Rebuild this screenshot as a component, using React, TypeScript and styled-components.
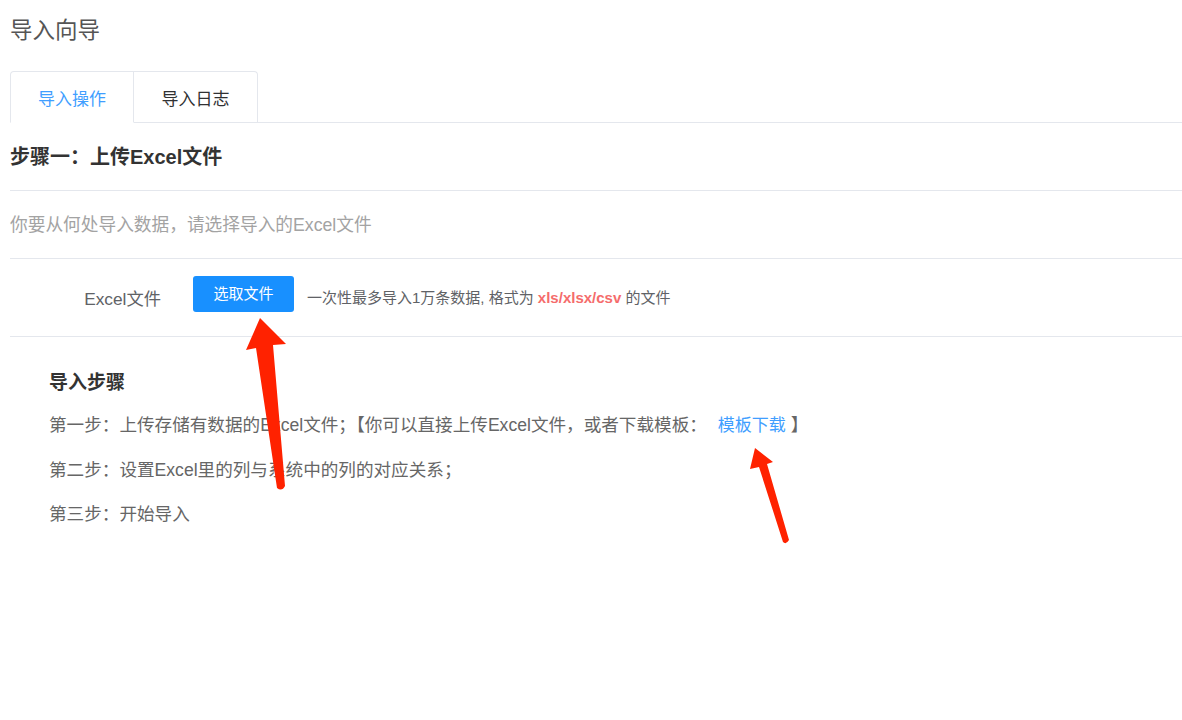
import React from "react";
import styled, { createGlobalStyle } from "styled-components";

const Global = createGlobalStyle`
  html, body { margin: 0; padding: 0; background: #fff; }
  body {
    font-family: "Liberation Sans", Arial, "Noto Sans CJK SC", sans-serif;
    -webkit-font-smoothing: antialiased;
  }
  * { box-sizing: border-box; }
`;

const Page = styled.div`
  position: relative;
  width: 1182px;
  height: 720px;
  padding-left: 10px;
  overflow: hidden;
`;

const Title = styled.h1`
  margin: 0;
  padding-top: 20px;
  font-size: 22.5px;
  line-height: 22px;
  font-weight: normal;
  color: #555;
`;

const TabBar = styled.div`
  display: flex;
  margin-top: 29px;
  border-bottom: 1px solid #e4e7ed;
  height: 52px;
`;

const Tab = styled.div<{ $active?: boolean; $first?: boolean }>`
  height: 52px;
  display: flex;
  align-items: center;
  justify-content: center;
  border-top: 1px solid #e4e7ed;
  border-right: 1px solid #e4e7ed;
  border-left: ${(p) => (p.$first ? "1px solid #e4e7ed" : "none")};
  border-radius: ${(p) => (p.$first ? "4px 0 0 0" : "0 4px 0 0")};
  border-bottom: 1px solid ${(p) => (p.$active ? "#fff" : "transparent")};
  width: 124px;
  font-size: 17px;
  color: ${(p) => (p.$active ? "#409eff" : "#303133")};
  margin-bottom: -1px;
  padding-top: 1px;
`;

const Section = styled.div<{ $h: number }>`
  height: ${(p) => p.$h}px;
  border-bottom: 1px solid #e4e7ed;
  display: flex;
  align-items: center;
`;

const StepTitle = styled.div`
  font-size: 20px;
  font-weight: bold;
  color: #333;
  margin-bottom: 3px;
`;

const Desc = styled.div`
  font-size: 17.7px;
  color: #a3a3a3;
  margin-bottom: 3px;
`;

const UploadRow = styled.div`
  display: flex;
  align-items: center;
  padding: 17px 0 24px;
  border-bottom: 1px solid #e4e7ed;
`;

const Label = styled.div`
  width: 151px;
  text-align: right;
  font-size: 17.3px;
  color: #606266;
  margin-right: 32px;
  padding-top: 6px;
`;

const PickButton = styled.button`
  width: 101px;
  height: 36px;
  border: none;
  border-radius: 3px;
  background: #1890ff;
  color: #fff;
  font-family: inherit;
  font-size: 15px;
  cursor: pointer;
  padding: 0 0 3px;
`;

const Hint = styled.div`
  margin-left: 13px;
  font-size: 15px;
  color: #606266;
  padding-top: 5px;
`;

const Red = styled.b`
  color: #f56c6c;
`;

const Steps = styled.div`
  padding: 30px 0 0 39px;
`;

const StepsHeading = styled.div`
  font-size: 19px;
  font-weight: bold;
  color: #333;
  line-height: 32px;
  margin-bottom: 4px;
`;

const StepLine = styled.div`
  font-size: 17.6px;
  line-height: 44px;
  color: #666;
`;

const Link = styled.a`
  color: #409eff;
  text-decoration: none;
  font-size: 17px;
  margin: 0 5px 0 11px;
`;

const Overlay = styled.svg`
  position: absolute;
  left: 0;
  top: 0;
  pointer-events: none;
`;

export default function App() {
  return (
    <Page>
      <Global />
      <Title>导入向导</Title>
      <TabBar>
        <Tab $active $first>导入操作</Tab>
        <Tab>导入日志</Tab>
      </TabBar>
      <Section $h={68}>
        <StepTitle>步骤一：上传Excel文件</StepTitle>
      </Section>
      <Section $h={68}>
        <Desc>你要从何处导入数据，请选择导入的Excel文件</Desc>
      </Section>
      <UploadRow>
        <Label>Excel文件</Label>
        <PickButton>选取文件</PickButton>
        <Hint>
          一次性最多导入1万条数据, 格式为 <Red>xls/xlsx/csv</Red> 的文件
        </Hint>
      </UploadRow>
      <Steps>
        <StepsHeading>导入步骤</StepsHeading>
        <StepLine>
          第一步：上传存储有数据的Excel文件；【你可以直接上传Excel文件，或者下载模板：
          <Link href="#">模板下载</Link>】
        </StepLine>
        <StepLine>第二步：设置Excel里的列与系统中的列的对应关系；</StepLine>
        <StepLine>第三步：开始导入</StepLine>
      </Steps>
      <Overlay width="1182" height="720" viewBox="0 0 1182 720">
        <path
          d="M260 318 L286 344 L273 345 L285 486 Q282 492 277 488 L256 348 L246 350 Z"
          fill="#ff2200"
        />
        <path
          d="M755 448 L773 462 L767 464 L789 540 Q786 545 783 542 L759 467 L750 469 Z"
          fill="#ff2200"
        />
      </Overlay>
    </Page>
  );
}
